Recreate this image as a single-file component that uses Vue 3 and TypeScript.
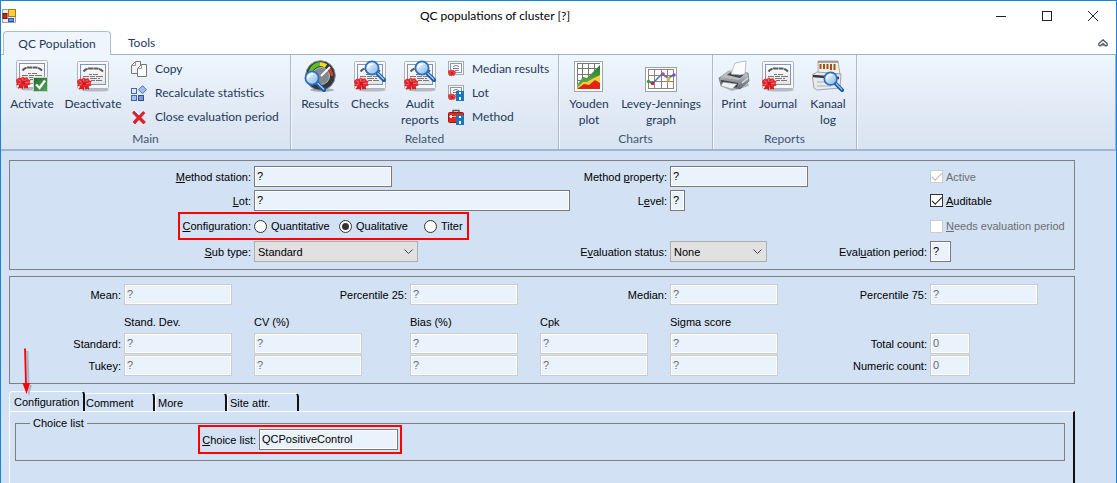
<script setup lang="ts">
import { ref, h } from 'vue'

interface BigItem { label: string[]; icon: string; width: string }
interface SmallItem { label: string; icon: string }
interface Group { title: string; cls: string; big: BigItem[]; small: SmallItem[] }

const groups: Group[] = [
  {
    title: 'Main',
    cls: 'g-main',
    big: [
      { label: ['Activate'], icon: 'activate', width: 'w52' },
      { label: ['Deactivate'], icon: 'cert', width: 'w70' },
    ],
    small: [
      { label: 'Copy', icon: 'copy' },
      { label: 'Recalculate statistics', icon: 'recalc' },
      { label: 'Close evaluation period', icon: 'cross' },
    ],
  },
  {
    title: 'Related',
    cls: 'g-related',
    big: [
      { label: ['Results'], icon: 'gauge', width: 'w50' },
      { label: ['Checks'], icon: 'search-cert', width: 'w50' },
      { label: ['Audit', 'reports'], icon: 'search-cert', width: 'w50' },
    ],
    small: [
      { label: 'Median results', icon: 'mini-cert' },
      { label: 'Lot', icon: 'mini-lot' },
      { label: 'Method', icon: 'toolbox' },
    ],
  },
  {
    title: 'Charts',
    cls: 'g-charts',
    big: [
      { label: ['Youden', 'plot'], icon: 'youden', width: 'w52' },
      { label: ['Levey-Jennings', 'graph'], icon: 'levey', width: 'w92' },
    ],
    small: [],
  },
  {
    title: 'Reports',
    cls: 'g-reports',
    big: [
      { label: ['Print'], icon: 'printer', width: 'w42' },
      { label: ['Journal'], icon: 'cert', width: 'w46' },
      { label: ['Kanaal', 'log'], icon: 'kanaal', width: 'w54' },
    ],
    small: [],
  },
]

// Renders "&" style access keys: the letter after "&" is underlined.
const Caption = (props: { text: string }) => {
  const at = props.text.indexOf('&')
  if (at < 0) return h('span', props.text)
  return h('span', [props.text.slice(0, at), h('u', props.text[at + 1]), props.text.slice(at + 2)])
}
Caption.props = ['text']

const configuration = ref('Qualitative')
const configurations = ['Quantitative', 'Qualitative', 'Titer']
const subType = ref('Standard')
const evaluationStatus = ref('None')
const auditable = ref(true)

const summary = [
  { label: 'Mean:', id: 'mean', labelCol: 'c1', col: 'c2' },
  { label: 'Percentile 25:', id: 'p25', labelCol: 'c3', col: 'c4' },
  { label: 'Median:', id: 'median', labelCol: 'c5', col: 'c6' },
  { label: 'Percentile 75:', id: 'p75', labelCol: 'c7', col: 'c8' },
]
const measures = [
  { title: 'Stand. Dev.', col: 'c2' },
  { title: 'CV (%)', col: 'c3' },
  { title: 'Bias (%)', col: 'c4' },
  { title: 'Cpk', col: 'c5' },
  { title: 'Sigma score', col: 'c6' },
]
const rows = [
  { label: 'Standard:', row: 'r3', count: 'Total count:' },
  { label: 'Tukey:', row: 'r4', count: 'Numeric count:' },
]

const tabs = ['Configuration', 'Comment', 'More', 'Site attr.']
const activeTab = ref('Configuration')
</script>

<template>
  <div class="window">
    <svg class="defs" aria-hidden="true">
      <defs>
        <linearGradient id="paper" x1="0" y1="0" x2="0" y2="1">
          <stop offset="0" stop-color="#ffffff" />
          <stop offset="1" stop-color="#e4e4e4" />
        </linearGradient>
        <linearGradient id="greenBox" x1="0" y1="0" x2="1" y2="1">
          <stop offset="0" stop-color="#1f6b2c" />
          <stop offset="1" stop-color="#4fa75a" />
        </linearGradient>
        <linearGradient id="lens" x1="0" y1="0" x2="1" y2="1">
          <stop offset="0" stop-color="#ffffff" />
          <stop offset="1" stop-color="#7cb6ef" />
        </linearGradient>
        <linearGradient id="greenHill" x1="0" y1="0" x2="0" y2="1">
          <stop offset="0" stop-color="#1c7a2c" />
          <stop offset="1" stop-color="#7bb556" />
        </linearGradient>
        <linearGradient id="metal" x1="0" y1="0" x2="0" y2="1">
          <stop offset="0" stop-color="#d2d5d8" />
          <stop offset="1" stop-color="#5f656b" />
        </linearGradient>
      </defs>
      <symbol id="rosette" viewBox="0 0 16 14">
        <path d="M4 7 L2 13 L5.5 12 L7 14 L8.5 9Z M8 8 L9 13 L11 12 L13 13 L12 6Z" fill="#d01a20" />
        <path d="M0.5 3 L3.5 1 L5 2 L7 0 L9.5 1.5 L12 0.5 L13 3 L15.5 4 L14.5 6 L15.5 8.5 L12.5 9.5 L11 11 L8.5 10 L6 11 L4 9.5 L0.5 9.5 L1 7 L0 5Z" fill="#e5262c" />
        <path d="M2.5 3.5 L5 5 M7 1.5 L7.4 4.5 M11.5 2.5 L9 5 M13.8 6 L10 6.6 M2.5 8 L5 7" stroke="#f58a8a" stroke-width="0.9" />
        <path d="M5.5 4.5 L9.5 8 M10 4.5 L6 8" stroke="#a31218" stroke-width="0.8" />
      </symbol>
      <symbol id="i-cert" viewBox="0 0 32 32">
        <ellipse cx="18" cy="30" rx="14" ry="1.6" fill="#8793a3" opacity="0.55" />
        <rect x="0.5" y="1.5" width="31" height="27" rx="1" fill="#f7f7f7" stroke="#b4b4b4" />
        <rect x="3.5" y="4.5" width="25" height="20" fill="url(#paper)" stroke="#7f95bf" />
        <path d="M6.5 11.5 Q9 8.5 12 8.5 H20 Q23 8.5 26 11.5" fill="none" stroke="#5a5a5a" stroke-width="2" stroke-dasharray="5 0.5" />
        <path d="M12 14.5h3M16 14.5h5M6 16.5h6M13 16.5h5M19 16.5h7M13 18.5h7M21 18.5h2M14 20.5h4M19 20.5h6" stroke="#777" />
        <use href="#rosette" x="0" y="17" width="15" height="14" />
      </symbol>
      <symbol id="i-activate" viewBox="0 0 32 32">
        <use href="#i-cert" x="0" y="-1" width="32" height="32" />
        <rect x="17.5" y="17.5" width="14" height="14" fill="url(#greenBox)" stroke="#c8d0c8" />
        <path d="M20 24.5 L23.5 28 L29 20.5" fill="none" stroke="#fff" stroke-width="2.4" />
      </symbol>
      <symbol id="glass" viewBox="0 0 22 22">
        <path d="M13 13 L20 20" stroke="#1e5aa8" stroke-width="4" stroke-linecap="round" />
        <path d="M13.5 13 L20 19.5" stroke="#a8cdf2" stroke-width="1.2" />
        <circle cx="8" cy="8" r="6.6" fill="url(#lens)" stroke="#2d6fc0" stroke-width="1.8" />
        <path d="M4 8 Q5 4 9 4" fill="none" stroke="#fff" stroke-width="1.5" />
      </symbol>
      <symbol id="i-search-cert" viewBox="0 0 32 32">
        <use href="#i-cert" x="0" y="0" width="32" height="32" />
        <use href="#glass" x="10" y="0" width="22" height="22" />
      </symbol>
      <symbol id="i-gauge" viewBox="0 0 32 32">
        <ellipse cx="18" cy="30" rx="12" ry="1.8" fill="#7c8794" opacity="0.6" />
        <circle cx="16.5" cy="15.5" r="14.8" fill="#34373b" stroke="#8c9197" />
        <path d="M6 15 A11 11 0 0 1 16 4" fill="none" stroke="#58c322" stroke-width="4" />
        <path d="M16 4 A11 11 0 0 1 22 6" fill="none" stroke="#f0dd21" stroke-width="4" />
        <path d="M24 8 A11 11 0 0 1 28 16" fill="none" stroke="#e33a2a" stroke-width="2.5" />
        <circle cx="17" cy="16" r="8.5" fill="#85898e" stroke="#b9bdc1" />
        <path d="M17 16 L26 7" stroke="#fff" stroke-width="1.8" />
        <use href="#glass" x="0" y="10" width="22" height="22" />
      </symbol>
      <symbol id="i-youden" viewBox="0 0 32 32">
        <rect x="1.5" y="1.5" width="28" height="30" fill="#fff" stroke="#a5a5a5" />
        <path d="M4 8.5h23M4 14.5h23M4 20.5h23M4 26.5h23M9.5 4v25M15.5 4v25M21.5 4v25M4.5 4v25M4 3.5h23" stroke="#777" />
        <path d="M4 25 L10 17 L14 18 L27 5 L27 29 L4 29Z" fill="url(#greenHill)" />
        <path d="M4 28 L10 22 L14 22 L19 19 L27 15 L27 29 L4 29Z" fill="#f5cf33" />
        <path d="M4 29 L11 24 L16 25 L22 20 L27 23 L27 29Z" fill="#e3231b" />
      </symbol>
      <symbol id="i-levey" viewBox="0 0 32 32">
        <rect x="0.5" y="7.5" width="31" height="24" fill="#fff" stroke="#a0a0a0" />
        <path d="M3 9.5h26M3 15.5h26M3 21.5h26M3 28.5h26M3.5 9v20M9.5 9v20M16.5 9v20M22.5 9v20M28.5 9v20" stroke="#858585" />
        <path d="M3 22 L8 23 L17 14 L23 18 L29 15" fill="none" stroke="#4673c4" stroke-width="1.6" />
        <circle cx="3.5" cy="21.5" r="1.7" fill="#2ba33a" />
        <circle cx="7.5" cy="23.5" r="1.8" fill="#dd2222" />
        <circle cx="18" cy="14" r="1.8" fill="#c83f8e" />
        <circle cx="23.5" cy="19" r="1.9" fill="#f0b322" />
        <circle cx="29" cy="15" r="1.8" fill="#7657b8" />
      </symbol>
      <symbol id="i-printer" viewBox="0 0 32 32">
        <path d="M2 26 L14 31 L31 26 L30 22 L3 22Z" fill="#8b929a" opacity="0.6" />
        <path d="M1 18 L11 11 L30 13 L31 21 L22 29 L3 25Z" fill="url(#metal)" stroke="#5f656b" stroke-width="0.7" />
        <path d="M2 17 L11 11 L29 13 L21 20Z" fill="#b9bdc1" />
        <path d="M9 15 L13 12 L28 13 L22 18Z" fill="#41464b" />
        <path d="M13 14 L17 3 L28 1 L27 14 L22 15Z" fill="#fbfbfb" stroke="#a9adb2" stroke-width="0.8" />
        <path d="M3 20 L20 23 L19 27 L4 24Z" fill="#33383d" />
        <path d="M5 22 L19 24 L14 29 L3 26Z" fill="#f1f1f1" stroke="#999" stroke-width="0.6" />
        <path d="M24 23 L30 18" stroke="#dfe2e4" stroke-width="1.2" />
      </symbol>
      <symbol id="i-kanaal" viewBox="0 0 32 32">
        <path d="M6 1 L26 1 L28 14 L6 13Z" fill="#f2efe9" stroke="#9b9b9b" stroke-width="0.8" />
        <path d="M6 2h20" stroke="#6b655f" stroke-width="1" />
        <path d="M8.5 4v5M12 4v5M15.5 4v5M19 4v6M22.5 4v6" stroke="#a24e18" stroke-width="2" />
        <path d="M0 15 L5 12 L29 14 L28 28 L5 30 L2 28Z" fill="#e7e9eb" stroke="#8e9499" stroke-width="0.8" />
        <path d="M1 16 L27 18" stroke="#34383c" stroke-width="2.4" />
        <path d="M5 22h12M5 26h14" stroke="#abb0b5" />
        <use href="#glass" x="11" y="11" width="21" height="21" />
      </symbol>
      <symbol id="i-copy" viewBox="0 0 16 16">
        <path d="M0.5 4.5 L4.5 0.5 H9.5 V12.5 H0.5Z" fill="#f5f5f5" stroke="#777" />
        <path d="M0.5 4.5 H4.5 V0.5" fill="none" stroke="#999" />
        <path d="M6.5 7.5 L10.5 3.5 H15.5 V15.5 H6.5Z" fill="#fff" stroke="#777" />
        <path d="M6.5 7.5 H10.5 V3.5" fill="none" stroke="#999" />
      </symbol>
      <symbol id="i-recalc" viewBox="0 0 16 16">
        <rect x="0.5" y="3.5" width="5" height="5" fill="#dfe9fb" stroke="#3e66ad" />
        <rect x="0.5" y="10.5" width="5" height="5" fill="#a8c0ea" stroke="#3e66ad" />
        <rect x="7.5" y="10.5" width="5" height="5" fill="#7798d4" stroke="#2c4f94" />
        <path d="M11.5 0.7 L15.5 4.7 L11.5 8.7 L7.5 4.7Z" fill="#9fbdf0" stroke="#4a72bb" />
      </symbol>
      <symbol id="i-cross" viewBox="0 0 16 16">
        <path d="M3 2 L8 7 L12 2.5 L14 4 L10 8.5 L14.5 13 L12.5 15 L8 10.5 L4 15 L2 13 L6 8.5 L1.5 4Z" fill="#e01f26" stroke="#b01218" stroke-width="0.6" />
      </symbol>
      <symbol id="i-mini-cert" viewBox="0 0 16 16">
        <rect x="0.5" y="0.5" width="15" height="13" fill="#f7f7f7" stroke="#aaa" />
        <rect x="2.5" y="2.5" width="11" height="9" fill="#fff" stroke="#8298c2" />
        <path d="M5 5.5 Q8 3.5 11 5.5 M5 7.5h6M7 9.5h4" fill="none" stroke="#777" />
        <use href="#rosette" x="0" y="8" width="8" height="8" />
      </symbol>
      <symbol id="save-badge" viewBox="0 0 8 10">
        <path d="M0 0h8v10h-8z" fill="#1b75b8" />
        <path d="M3 1h2v2h-2z M3 6h2v3h-2z" fill="#fff" />
      </symbol>
      <symbol id="i-mini-lot" viewBox="0 0 16 16">
        <use href="#i-mini-cert" x="0" y="0" width="16" height="16" />
        <use href="#save-badge" x="8" y="6" width="8" height="10" />
      </symbol>
      <symbol id="i-toolbox" viewBox="0 0 16 16">
        <path d="M5 4 V1.5 H11 V4" fill="none" stroke="#555" stroke-width="1.4" />
        <rect x="0.5" y="3.5" width="15" height="10" rx="1" fill="#dc2b26" stroke="#a8130f" />
        <path d="M1 7.5h14" stroke="#ffb5ad" />
        <path d="M3 6v3" stroke="#eee" stroke-width="2" />
        <use href="#save-badge" x="8" y="6" width="8" height="10" />
      </symbol>
    </svg>

    <header class="titlebar">
      <svg class="app-icon" viewBox="0 0 14 14" aria-hidden="true">
        <path d="M0.5 0.5h13v13h-13z" fill="#ededed" stroke="#a0a0a0" />
        <rect x="1" y="4.5" width="4" height="5" fill="#cf2318" stroke="#7c130c" />
        <rect x="6.5" y="0.5" width="7" height="7" fill="#ffcf3d" stroke="#a87b0c" />
        <rect x="6.5" y="9.5" width="5" height="3" fill="#5d94f0" stroke="#2956b5" />
      </svg>
      <h1 class="title">QC populations of cluster [?]</h1>
      <button class="win-btn" type="button" aria-label="Minimize">
        <svg viewBox="0 0 10 10"><path d="M0 5.5h10" stroke="#222" /></svg>
      </button>
      <button class="win-btn" type="button" aria-label="Maximize">
        <svg viewBox="0 0 10 10"><rect x="0.5" y="0.5" width="9" height="9" fill="none" stroke="#222" /></svg>
      </button>
      <button class="win-btn" type="button" aria-label="Close">
        <svg viewBox="0 0 10 10"><path d="M0 0L10 10M10 0L0 10" stroke="#222" /></svg>
      </button>
    </header>

    <nav class="ribbon-tabs">
      <button class="ribbon-tab active" type="button">QC Population</button>
      <button class="ribbon-tab" type="button">Tools</button>
      <button class="collapse" type="button" aria-label="Collapse ribbon">
        <svg viewBox="0 0 10 8">
          <path d="M5 0.8 L9.2 4.5 V6.2 L8 7 L5 4.6 L2 7 L0.8 6.2 V4.5Z" fill="#eef5fb" stroke="#4a5663" stroke-width="1.2" />
          <path d="M3.5 7 L5 5.6 L6.5 7" fill="none" stroke="#4a5663" />
        </svg>
      </button>
    </nav>

    <div class="ribbon">
      <section v-for="g in groups" :key="g.title" class="group" :class="g.cls">
        <div class="group-body">
          <button v-for="b in g.big" :key="b.label[0]" type="button" class="big" :class="b.width">
            <svg class="icon32" aria-hidden="true"><use :href="'#i-' + b.icon" /></svg>
            <span class="big-label"><span v-for="l in b.label" :key="l">{{ l }}</span></span>
          </button>
          <div v-if="g.small.length" class="small-col">
            <button v-for="s in g.small" :key="s.label" type="button" class="small">
              <svg class="icon16" aria-hidden="true"><use :href="'#i-' + s.icon" /></svg>
              <span>{{ s.label }}</span>
            </button>
          </div>
        </div>
        <div class="group-title">{{ g.title }}</div>
      </section>
    </div>

    <main class="content">
      <form class="panel general" @submit.prevent>
        <label class="lbl c1 r1" for="station"><Caption text="&Method station:" /></label>
        <input id="station" class="field w138 c2 r1" value="?" readonly />
        <label class="lbl c3 r1" for="property"><Caption text="Method &property:" /></label>
        <input id="property" class="field w138 c4 r1" value="?" readonly />
        <label class="check off c6 r1"><input type="checkbox" checked disabled />Active</label>

        <label class="lbl c1 r2" for="lot"><Caption text="&Lot:" /></label>
        <input id="lot" class="field wfull c2 r2" value="?" readonly />
        <label class="lbl c3 r2" for="level"><Caption text="L&evel:" /></label>
        <input id="level" class="field w15 c4 r2" value="?" readonly />
        <label class="check c6 r2"><input v-model="auditable" type="checkbox" /><Caption text="&Auditable" /></label>

        <span id="cfg" class="lbl c1 r3"><Caption text="&Configuration:" /></span>
        <div class="radios c2 r3" role="radiogroup" aria-labelledby="cfg">
          <label v-for="c in configurations" :key="c" class="radio">
            <input v-model="configuration" type="radio" name="configuration" :value="c" />{{ c }}
          </label>
          <span class="highlight mark-config" aria-hidden="true"></span>
        </div>
        <label class="check off c6 r3"><input type="checkbox" disabled /><Caption text="&Needs evaluation period" /></label>

        <label class="lbl c1 r4" for="subtype"><Caption text="&Sub type:" /></label>
        <div class="select w164 c2 r4">
          <select id="subtype" v-model="subType"><option>Standard</option></select>
          <svg viewBox="0 0 9 5" aria-hidden="true"><path d="M0.5 0.5L4.5 4.5L8.5 0.5" /></svg>
        </div>
        <label class="lbl c3 r4" for="status"><Caption text="E&valuation status:" /></label>
        <div class="select w97 c4 r4">
          <select id="status" v-model="evaluationStatus"><option>None</option></select>
          <svg viewBox="0 0 9 5" aria-hidden="true"><path d="M0.5 0.5L4.5 4.5L8.5 0.5" /></svg>
        </div>
        <label class="lbl c5 r4" for="period"><Caption text="Eval&uation period:" /></label>
        <input id="period" class="field w21 c6 r4" value="?" readonly />
      </form>

      <form class="panel stats" @submit.prevent>
        <template v-for="s in summary" :key="s.id">
          <label class="lbl r1" :class="s.labelCol" :for="s.id">{{ s.label }}</label>
          <input :id="s.id" class="field w108 r1" :class="s.col" value="?" disabled />
        </template>
        <span v-for="m in measures" :key="m.title" class="head r2" :class="m.col">{{ m.title }}</span>
        <template v-for="r in rows" :key="r.label">
          <span class="lbl c1" :class="r.row">{{ r.label }}</span>
          <input
            v-for="m in measures"
            :key="m.title"
            class="field w108"
            :class="[m.col, r.row]"
            :aria-label="r.label + ' ' + m.title"
            value="?"
            disabled
          />
          <label class="lbl c7" :class="r.row" :for="'count-' + r.row">{{ r.count }}</label>
          <input :id="'count-' + r.row" class="field w40 c8" :class="r.row" value="0" disabled />
        </template>
      </form>

      <div class="tabs" role="tablist">
        <button
          v-for="t in tabs"
          :key="t"
          type="button"
          role="tab"
          class="tab"
          :class="{ selected: t === activeTab }"
          :aria-selected="t === activeTab"
          @click="activeTab = t"
        >{{ t }}</button>
        <svg class="arrow" viewBox="0 0 14 50" aria-hidden="true">
          <path d="M7 3 L8.5 37 L6 37 L10 48 L13 37 L10.5 37 L9.5 3Z" fill="#7f8ba0" opacity="0.5" />
          <path d="M6 0.5 L7 36" stroke="#f00" stroke-width="1.8" />
          <path d="M3.5 35 L11 35 L7.5 46Z" fill="#f00" />
        </svg>
      </div>
      <div class="page" role="tabpanel">
        <fieldset class="choice">
          <legend>Choice list</legend>
          <div class="choice-row">
            <label class="lbl" for="choice"><Caption text="&Choice list:" /></label>
            <input id="choice" class="field w139" value="QCPositiveControl" readonly />
            <span class="highlight mark-choice" aria-hidden="true"></span>
          </div>
        </fieldset>
      </div>
    </main>
  </div>
</template>

<style>
html,
body {
  background: #d2e1f4;
}
</style>

<style scoped>
* {
  box-sizing: border-box;
}
.window {
  display: flex;
  flex-direction: column;
  min-height: 100vh;
  border: 1px solid #1883d7;
  border-bottom: 0;
  background: #d2e1f4;
  color: #000;
  font: 11px/14px "Liberation Sans", Arial, sans-serif;
}
.defs {
  position: absolute;
  width: 0;
  height: 0;
}
button {
  margin: 0;
  padding: 0;
  border: 0;
  background: none;
  font: inherit;
  color: inherit;
}
.titlebar,
.ribbon-tabs,
.ribbon {
  font: 12px/16px Lato, "Open Sans", sans-serif;
}
.titlebar {
  display: flex;
  align-items: center;
  height: 30px;
  background: #fff;
}
.app-icon {
  width: 14px;
  height: 14px;
  margin-left: 1px;
}
.title {
  flex: 1;
  margin: 0;
  padding-right: 4px;
  font: inherit;
  text-align: center;
}
.win-btn {
  display: grid;
  place-items: center;
  width: 46px;
  height: 30px;
}
.win-btn svg {
  width: 10px;
  height: 10px;
}
.ribbon-tabs {
  display: flex;
  height: 24px;
  padding-left: 2px;
  background: #fff;
  border-bottom: 1px solid #9fb3cc;
  color: #1e395b;
}
.ribbon-tab {
  height: 24px;
  padding: 0 17px;
}
.ribbon-tab.active {
  width: 108px;
  padding: 0;
  border: 1px solid #a9bdd6;
  border-bottom: 0;
  border-radius: 4px 4px 0 0;
  background: #eef5fd;
}
.collapse {
  display: grid;
  place-items: center;
  margin-left: auto;
  width: 26px;
}
.collapse svg {
  width: 10px;
  height: 8px;
}
.ribbon {
  display: flex;
  height: 96px;
  border-right: 1px solid #a3b4cf;
  border-bottom: 2px solid #a3b4cf;
  background: linear-gradient(#eef6fe, #e4ecf7 45%, #d8e4f1);
  color: #1e395b;
}
.group {
  display: flex;
  flex-direction: column;
  justify-content: space-between;
  padding-top: 2px;
  border-right: 1px solid #a9bad1;
  box-shadow: 1px 0 #f3f8fd;
}
.g-main {
  width: 290px;
}
.g-related {
  width: 268px;
}
.g-charts {
  width: 154px;
}
.g-reports {
  width: 144px;
}
.group-body {
  display: flex;
  padding-left: 4px;
}
.g-main .group-body {
  padding-left: 5px;
}
.g-reports .group-body {
  padding-left: 0;
}
.group-title {
  line-height: 20px;
  text-align: center;
  color: #3e5576;
}
.big {
  display: flex;
  flex-direction: column;
  align-items: center;
  gap: 4px;
  height: 72px;
  padding-top: 3px;
}
.big-label {
  display: flex;
  flex-direction: column;
  white-space: nowrap;
}
.w42 { width: 42px; }
.w46 { width: 46px; }
.w50 { width: 50px; }
.w52 { width: 52px; }
.w54 { width: 54px; }
.w70 { width: 70px; }
.w92 { width: 92px; }
.icon32 {
  width: 32px;
  height: 32px;
}
.icon16 {
  width: 16px;
  height: 16px;
}
.small-col {
  display: flex;
  flex-direction: column;
  padding-left: 3px;
}
.small {
  display: flex;
  align-items: center;
  gap: 8px;
  height: 24px;
  white-space: nowrap;
}
.content {
  display: flex;
  flex: 1;
  flex-direction: column;
  padding: 9px 41px 0 8px;
}
.panel {
  display: grid;
  align-items: center;
  margin: 0 0 6px;
  border: 1px solid #808080;
}
.general {
  grid-template-columns: 244px 316px 100px minmax(160px, 1fr) 100px 144px;
  grid-template-rows: 21px 21px 24px 21px;
  row-gap: 3px;
  padding: 5px 0 7px;
}
.stats {
  grid-template-columns: 114px 130px 156px 130px 130px minmax(130px, 1fr) 130px 144px;
  grid-template-rows: 21px 26px 21px 21px;
  row-gap: 1px;
  margin-bottom: 7px;
  padding: 7px 0;
}
.head {
  padding-top: 6px;
}
.c1 { grid-column: 1; }
.c2 { grid-column: 2; }
.c3 { grid-column: 3; }
.c4 { grid-column: 4; }
.c5 { grid-column: 5; }
.c6 { grid-column: 6; }
.c7 { grid-column: 7; }
.c8 { grid-column: 8; }
.r1 { grid-row: 1; }
.r2 { grid-row: 2; }
.r3 { grid-row: 3; }
.r4 { grid-row: 4; }
.lbl {
  padding-right: 3px;
  text-align: right;
  white-space: nowrap;
}
.field {
  height: 21px;
  min-width: 0;
  margin: 0;
  padding: 0 2px 2px;
  border: 1px solid #7a7a7a;
  border-radius: 0;
  outline: 0;
  background: #eaf2fc;
  box-shadow: inset 0 0 0 1px #fff;
  color: #000;
  font: inherit;
}
.field:disabled {
  border-color: #ccc;
  color: #6d6d6d;
}
.w15 { width: 15px; }
.w21 { width: 21px; }
.w40 { width: 40px; }
.w97 { width: 97px; }
.w108 { width: 108px; }
.w138 { width: 138px; }
.w139 { width: 139px; }
.w164 { width: 164px; }
.wfull { width: 100%; }
.check,
.radio {
  display: flex;
  align-items: center;
  gap: 3px;
  white-space: nowrap;
}
.check.off {
  color: #6d6d6d;
}
.check input,
.radio input {
  appearance: none;
  display: grid;
  place-items: center;
  flex: none;
  width: 13px;
  height: 13px;
  margin: 0;
  border: 1px solid #333;
  background: #fff;
}
.check input:disabled {
  border-color: #ccc;
}
.check input:checked::before {
  content: "";
  width: 9px;
  height: 4px;
  margin-bottom: 3px;
  border-left: 1px solid #222;
  border-bottom: 1px solid #222;
  transform: rotate(-45deg);
}
.check input:disabled::before {
  border-color: #bbb;
}
.radios {
  position: relative;
  display: flex;
}
.radio {
  gap: 4px;
  width: 85px;
}
.radio input {
  border-radius: 50%;
}
.radio input:checked::before {
  content: "";
  width: 7px;
  height: 7px;
  border-radius: 50%;
  background: #333;
}
.highlight {
  position: absolute;
  border: 2px solid #f00;
  pointer-events: none;
}
.mark-config {
  left: -76px;
  top: -7px;
  width: 291px;
  height: 28px;
}
.mark-choice {
  left: 182px;
  top: -4px;
  width: 204px;
  height: 29px;
}
.select {
  position: relative;
  height: 21px;
}
.select select {
  appearance: none;
  width: 100%;
  height: 21px;
  margin: 0;
  padding: 0 3px;
  border: 1px solid #adadad;
  border-radius: 0;
  background: #e1e1e1;
  color: #000;
  font: inherit;
}
.select svg {
  position: absolute;
  right: 5px;
  top: 8px;
  width: 9px;
  height: 5px;
  fill: none;
  stroke: #444;
  pointer-events: none;
}
.tabs {
  position: relative;
  display: flex;
  align-items: flex-end;
  height: 20px;
}
.tab {
  width: 72px;
  height: 18px;
  padding: 0 2px;
  border-top: 1px solid #fff;
  border-left: 1px solid #fff;
  border-right: 2px solid #111;
  border-radius: 4px 4px 0 0;
  text-align: left;
}
.tab.selected {
  z-index: 1;
  width: 76px;
  height: 20px;
  margin-right: -2px;
  padding-left: 4px;
}
.arrow {
  position: absolute;
  left: 10px;
  top: -43px;
  z-index: 2;
  width: 14px;
  height: 50px;
}
.page {
  flex: 1;
  padding: 5px 8px 20px 5px;
  border-top: 1px solid #fff;
  border-left: 1px solid #fff;
  border-right: 2px solid #111;
}
.choice {
  min-width: 0;
  margin: 0;
  padding: 0 0 10px;
  border: 1px solid #808080;
}
.choice legend {
  margin-left: 14px;
  padding: 0 3px;
  line-height: 12px;
}
.choice-row {
  position: relative;
  display: grid;
  grid-template-columns: 243px auto;
  align-items: center;
  justify-content: start;
}
</style>
